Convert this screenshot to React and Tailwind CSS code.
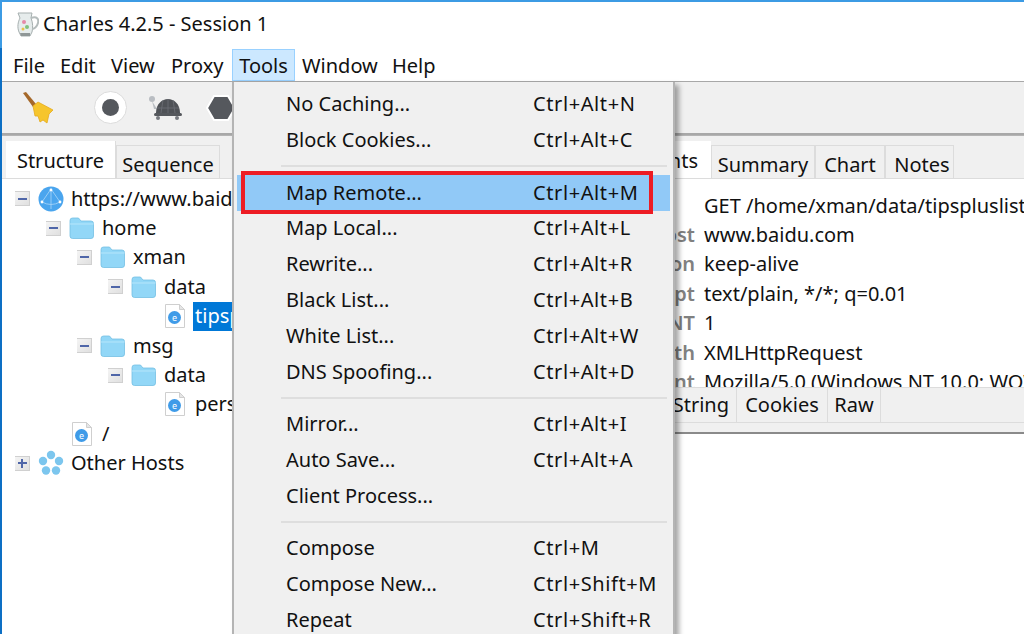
const font = { fontFamily: '"Noto Sans", sans-serif' }

const menuGroups = [
  [['No Caching...', 'Ctrl+Alt+N'], ['Block Cookies...', 'Ctrl+Alt+C']],
  [['Map Remote...', 'Ctrl+Alt+M'], ['Map Local...', 'Ctrl+Alt+L'], ['Rewrite...', 'Ctrl+Alt+R'], ['Black List...', 'Ctrl+Alt+B'], ['White List...', 'Ctrl+Alt+W'], ['DNS Spoofing...', 'Ctrl+Alt+D']],
  [['Mirror...', 'Ctrl+Alt+I'], ['Auto Save...', 'Ctrl+Alt+A'], ['Client Process...', '']],
  [['Compose', 'Ctrl+M'], ['Compose New...', 'Ctrl+Shift+M'], ['Repeat', 'Ctrl+Shift+R']],
]

const headers = [
  ['', 'GET /home/xman/data/tipspluslist?'],
  ['Host', 'www.baidu.com'],
  ['Connection', 'keep-alive'],
  ['Accept', 'text/plain, */*; q=0.01'],
  ['DNT', '1'],
  ['X-Requested-With', 'XMLHttpRequest'],
  ['User-Agent', 'Mozilla/5.0 (Windows NT 10.0; WOW64)'],
]

function Jug() {
  return (
    <svg width="23" height="25" viewBox="0 0 23 25">
      <path d="M2 1h14l-1 5c2 5 2 10 1 14l-2 4H5l-2-4C1 15 2 10 4 6z" fill="#e6ecec" stroke="#a6afaf" />
      <path d="M15 6c6-2 8 1 7 5s-4 6-6 6" fill="none" stroke="#b4bcbc" strokeWidth="2" />
      <circle cx="8" cy="10" r="2" fill="#e58aa8" />
      <circle cx="11" cy="15" r="2" fill="#7fc27f" />
      <circle cx="7" cy="17" r="1.500" fill="#e8c24a" />
      <path d="M4 21h10v3H5z" fill="#8f9797" />
    </svg>
  )
}

function Broom() {
  return (
    <svg width="34" height="32" viewBox="0 0 34 32">
      <path d="M1 1l3-1 10 12-3 3z" fill="#a5682a" />
      <path d="M11 14l5-4 15 8-4 4-2 9-4-3-3 2-2-6-3 0z" fill="#f6c52c" stroke="#e5a91c" strokeWidth="0.8" />
    </svg>
  )
}

function Turtle() {
  return (
    <svg width="34" height="28" viewBox="0 0 34 28">
      <circle cx="4" cy="5" r="3" fill="#b9bdc2" />
      <path d="M4 7l5 8H6z" fill="#b9bdc2" />
      <path d="M8 19c0-9 6-14 12-14s12 5 12 14z" fill="#4f5257" />
      <path d="M15 6l-2 13M20 5v14M25 6l2 13M9 14h22" stroke="#6d7076" strokeWidth="0.8" />
      <rect x="6" y="19" width="28" height="3" rx="1.500" fill="#55585d" />
      <circle cx="10" cy="24" r="2" fill="#777a80" />
      <circle cx="29" cy="24" r="2" fill="#777a80" />
    </svg>
  )
}

function Globe() {
  return (
    <svg width="26" height="26" viewBox="0 0 26 26">
      <circle cx="13" cy="13" r="12.500" fill="#4aa5ee" />
      <path d="M13 3L4 16q9 5 18 0zM13 3v20" fill="none" stroke="#a9d6f8" strokeWidth="0.8" />
      <circle cx="13" cy="4" r="1.400" fill="#fff" />
      <circle cx="4" cy="16" r="1.400" fill="#fff" />
      <circle cx="22" cy="16" r="1.400" fill="#fff" />
    </svg>
  )
}

function Hosts() {
  return (
    <svg width="26" height="26" viewBox="0 0 26 26" fill="#7cc6ee">
      <circle cx="13" cy="5" r="4.200" />
      <circle cx="5" cy="11" r="4.200" />
      <circle cx="21" cy="11" r="4.200" />
      <circle cx="8" cy="20.500" r="4.200" />
      <circle cx="18" cy="20.500" r="4.200" />
    </svg>
  )
}

function Folder() {
  return (
    <svg width="25" height="22" viewBox="0 0 25 22">
      <path d="M1 3.500Q1 1 3.500 1h6l2.500 3H22q2.500 0 2.500 2.500V19q0 2.500-2.500 2.500H3.500Q1 21.500 1 19z" fill="#92d7f7" stroke="#74bfe3" strokeWidth="0.8" />
      <path d="M1 7h23.500" stroke="#b6e6fb" strokeWidth="1" />
    </svg>
  )
}

function Doc() {
  return (
    <svg width="20" height="24" viewBox="0 0 20 24">
      <path d="M.5.500h14l5 5v18H.5z" fill="#fff" stroke="#cfcfcf" />
      <path d="M14.500.500v5h5z" fill="#e6e6e6" stroke="#cfcfcf" />
      <circle cx="9.500" cy="13.500" r="6.500" fill="#3f9be8" />
      <text x="9.500" y="16.500" textAnchor="middle" fontSize="9" fill="#fff" fontFamily="Noto Sans">e</text>
    </svg>
  )
}

function Toggle({ plus }) {
  return (
    <span className="relative flex h-[15px] w-[15px] shrink-0 items-center justify-center border-y border-r border-[#d0d0d0] bg-gradient-to-br from-[#f4f4f4] to-[#e0e0e0]">
      <span className="h-[2px] w-[9px] bg-[#4f66a8]" />
      {plus && <span className="absolute h-[9px] w-[2px] bg-[#4f66a8]" />}
    </span>
  )
}

function TreeRow({ indent, toggle, plus, icon, label, selected }) {
  return (
    <div className="flex h-[29.400px] items-center whitespace-nowrap">
      <span className="flex shrink-0 justify-end" style={{ width: indent }}>
        {toggle && <Toggle plus={plus} />}
      </span>
      <span className="flex w-[41px] shrink-0 justify-center">{icon}</span>
      <span className={selected ? '-ml-[2px] flex h-[29px] items-center bg-[#0078d7] pl-[2px] pr-4 text-white' : ''}>{label}</span>
    </div>
  )
}

function Tab({ children, active, width }) {
  return (
    <div className={active
      ? 'flex h-[37px] shrink-0 items-center justify-center border-r border-[#dcdcdc] bg-white pt-[3px]'
      : 'flex h-[33px] shrink-0 items-center justify-center border-x border-t border-[#dcdcdc] bg-[#f0f0f0] pt-[5px]'}
      style={{ width }}>
      {children}
    </div>
  )
}

export default function App() {
  return (
    <div className="relative h-[634px] w-[1024px] overflow-hidden bg-white text-[20px] text-[#111]" style={font}>
      {/* title bar */}
      <div className="flex h-[48px] items-center gap-[4px] border-t-2 border-l-2 border-[#3c9be4] pb-[2px] pl-[14px]">
        <Jug />
        <span>Charles 4.2.5 - Session 1</span>
      </div>

      <div className="flex h-[586px] border-l-2 border-[#0d6fc4]">
        <div className="flex min-w-0 flex-1 flex-col">
          {/* menu bar */}
          <div className="flex h-[34px] items-center border-b border-[#a8a8a8] bg-white pl-[11px] pt-[2px]">
            <span className="w-[47px]">File</span>
            <span className="w-[51px]">Edit</span>
            <span className="w-[60px]">View</span>
            <span className="w-[61px]">Proxy</span>
            <span className="-mt-[2px] flex h-[32px] w-[63px] items-center justify-center border border-[#99d1ff] bg-[#cce8ff] pt-[2px]">Tools</span>
            <span className="ml-[7px] w-[90px]">Window</span>
            <span>Help</span>
          </div>

          {/* toolbar */}
          <div className="flex h-[53px] shrink-0 items-center border-b-2 border-[#a8a8a8] bg-[#f0f0f0] pl-[20px]">
            <Broom />
            <span className="ml-[38px] flex h-[33px] w-[33px] items-center justify-center rounded-full border border-[#dcdcdc] bg-white">
              <span className="h-[17px] w-[17px] rounded-full bg-[#55585d]" />
            </span>
            <span className="ml-[21px]"><Turtle /></span>
            <svg className="ml-[24px]" width="30" height="30" viewBox="0 0 30 30">
              <path d="M8 3h14l7 12-7 12H8L1 15z" fill="#55585d" stroke="#fff" strokeWidth="2" />
            </svg>
          </div>

          <div className="flex min-h-0 flex-1">
            {/* left pane: structure tree */}
            <div className="flex w-[230px] shrink-0 flex-col">
              <div className="flex h-[44px] shrink-0 items-end border-t border-b border-t-[#b4b4b4] border-b-[#dcdcdc] bg-[#f0f0f0] pl-[4px]">
                <Tab active width={110}>Structure</Tab>
                <Tab width={104}>Sequence</Tab>
              </div>
              <div className="overflow-hidden pt-[5px]">
                <TreeRow indent={28} toggle icon={<Globe />} label="https://www.baidu.com" />
                <TreeRow indent={59} toggle icon={<Folder />} label="home" />
                <TreeRow indent={90} toggle icon={<Folder />} label="xman" />
                <TreeRow indent={121} toggle icon={<Folder />} label="data" />
                <TreeRow indent={152} icon={<Doc />} label="tipspluslist" selected />
                <TreeRow indent={90} toggle icon={<Folder />} label="msg" />
                <TreeRow indent={121} toggle icon={<Folder />} label="data" />
                <TreeRow indent={152} icon={<Doc />} label="personal" />
                <TreeRow indent={59} icon={<Doc />} label="/" />
                <TreeRow indent={28} toggle plus icon={<Hosts />} label="Other Hosts" />
              </div>
            </div>

            {/* right pane: request details */}
            <div className="flex min-w-0 flex-1 flex-col overflow-hidden">
              <div className="flex h-[44px] shrink-0 items-end border-t border-b border-t-[#b4b4b4] border-b-[#dcdcdc] bg-[#f0f0f0] pl-[436px]">
                <div className="flex h-[37px] w-[43px] shrink-0 items-center justify-end bg-white pt-[3px] pr-[13px]">nts</div>
                <Tab width={104}>Summary</Tab>
                <Tab width={70}>Chart</Tab>
                <Tab width={69}><span className="ml-[5px]">Notes</span></Tab>
              </div>
              <div className="h-[208px] shrink-0 overflow-hidden pt-[12px]">
                {headers.map(([name, value]) => (
                  <div key={value} className="flex h-[29.400px] items-center whitespace-nowrap">
                    <span className="w-[463px] shrink-0 text-right font-semibold text-[#808080]">{name}</span>
                    <span className="pl-[9px]">{value}</span>
                  </div>
                ))}
              </div>
              <div className="flex h-[36px] shrink-0 items-start border-y border-[#dcdcdc] bg-[#f0f0f0] pl-[395px]">
                <div className="flex h-[34px] w-[110px] shrink-0 items-center justify-end border-r border-[#dcdcdc] pr-[7px]">String</div>
                <div className="flex h-[34px] w-[91px] shrink-0 items-center justify-center border-r border-[#dcdcdc]">Cookies</div>
                <div className="flex h-[34px] w-[53px] shrink-0 items-center justify-center border-r border-[#dcdcdc]">Raw</div>
              </div>
              <div className="h-[11px] shrink-0 border-b-2 border-[#8a8a8a] bg-[#f0f0f0]" />
              <div className="flex-1 bg-white" />
            </div>
          </div>
        </div>
      </div>

      {/* open Tools menu */}
      <div className="absolute top-[82px] left-[232px] h-[560px] w-[443px] border-x-2 border-[#b4b4b4] bg-[#f0f0f0] pt-[4px] shadow-[4px_3px_5px_rgba(0,0,0,0.35)]">
        {menuGroups.map((group, i) => (
          <div key={i}>
            {i > 0 && <div className={`ml-[47px] mr-[6px] h-[2px] bg-[#dedede] ${i === 1 ? 'my-[7.600px]' : i === 2 ? 'my-[7.200px]' : 'my-[7px]'}`} />}
            {group.map(([label, shortcut]) => (
              <div key={label} className={`relative mx-[3px] flex items-center pl-[49px] ${i < 2 ? 'h-[35.800px]' : 'h-[36px]'} ${label === 'Map Remote...' ? 'bg-[#91c9f7]' : ''}`}>
                <span className="w-[247px] shrink-0">{label}</span>
                <span className="tracking-[0.600px]">{shortcut}</span>
                {label === 'Map Remote...' && (
                  <span className="absolute -top-[4px] -bottom-[3px] left-[4px] w-[412px] border-4 border-[#ed1c24]" />
                )}
              </div>
            ))}
          </div>
        ))}
      </div>
    </div>
  )
}
